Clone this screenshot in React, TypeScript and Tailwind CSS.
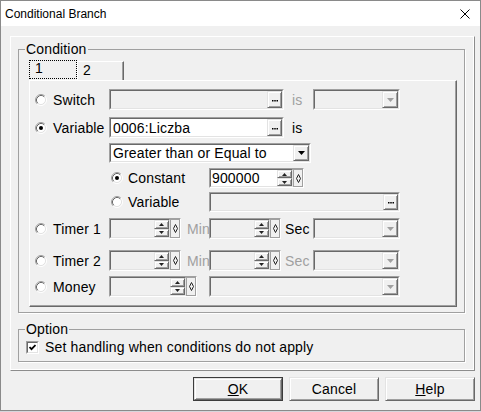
import type { ReactNode } from "react";

const sunkenOut = "border border-t-[#a0a0a0] border-l-[#a0a0a0] border-r-white border-b-white";
const sunkenIn = "border border-t-[#696969] border-l-[#696969] border-r-[#e3e3e3] border-b-[#e3e3e3]";
const raised =
  "border border-t-[#e3e3e3] border-l-[#e3e3e3] border-r-[#696969] border-b-[#696969] shadow-[inset_1px_1px_0_#fff,inset_-1px_-1px_0_#a0a0a0] bg-[#f0f0f0]";

function Radio({ checked }: { checked?: boolean }) {
  return (
    <svg width="12" height="12" viewBox="0 0 12 12" className="shrink-0">
      <circle cx="6" cy="6" r="4.5" fill="#fff" />
      <path d="M2.11 9.89A5.5 5.5 0 0 1 9.89 2.11" fill="none" stroke="#a0a0a0" />
      <path d="M9.89 2.11A5.5 5.5 0 0 1 2.11 9.89" fill="none" stroke="#fff" />
      <path d="M2.82 9.18A4.5 4.5 0 0 1 9.18 2.82" fill="none" stroke="#696969" />
      <path d="M9.18 2.82A4.5 4.5 0 0 1 2.82 9.18" fill="none" stroke="#e3e3e3" />
      {checked && <circle cx="6" cy="6" r="2" fill="#000" />}
    </svg>
  );
}

function Sunken({ className, white, children }: { className: string; white?: boolean; children?: ReactNode }) {
  return (
    <div className={`${sunkenOut} shrink-0 flex ${className}`}>
      <div className={`${sunkenIn} flex-1 flex min-w-0 ${white ? "bg-white" : "bg-[#f0f0f0]"}`}>{children}</div>
    </div>
  );
}

function Dots() {
  return (
    <svg width="6" height="2" viewBox="0 0 6 2">
      <rect x="0" y="0" width="1.5" height="1.5" fill="#000" />
      <rect x="2.25" y="0" width="1.5" height="1.5" fill="#000" />
      <rect x="4.5" y="0" width="1.5" height="1.5" fill="#000" />
    </svg>
  );
}

function EllipsisField({ className, text }: { className: string; text?: string }) {
  return (
    <Sunken className={className} white={!!text}>
      <span className="flex-1 pl-[2px] self-center whitespace-nowrap">{text}</span>
      <div className={`${raised} w-[15px] flex items-center justify-center pt-[2px]`}>
        <Dots />
      </div>
    </Sunken>
  );
}

function Combo({ className, text, enabled }: { className: string; text?: string; enabled?: boolean }) {
  return (
    <Sunken className={className} white={enabled}>
      <span className="flex-1 pl-[2px] self-center whitespace-nowrap">{text}</span>
      <div className={`${raised} w-[16px] flex items-center justify-center`}>
        <svg width="7" height="4" viewBox="0 0 7 4">
          <polygon points="0,0 7,0 3.5,4" fill={enabled ? "#000" : "#a0a0a0"} />
        </svg>
      </div>
    </Sunken>
  );
}

function Arrow({ up }: { up?: boolean }) {
  return (
    <svg width="5" height="3" viewBox="0 0 5 3">
      <polygon points={up ? "0,3 5,3 2.5,0" : "0,0 5,0 2.5,3"} fill="#222" />
    </svg>
  );
}

function Spin({ className, value }: { className: string; value?: string }) {
  return (
    <div className={`${sunkenOut} shrink-0 flex ${className}`}>
      <div className={`${sunkenIn} flex-1 flex min-w-0 ${value ? "bg-white" : "bg-[#f0f0f0]"}`}>
        <span className="flex-1 pl-[1px] self-center">{value}</span>
        <div className="w-[15px] flex flex-col">
          <div className={`${raised} flex-1 flex items-center justify-center`}>
            <Arrow up />
          </div>
          <div className={`${raised} flex-1 flex items-center justify-center`}>
            <Arrow />
          </div>
        </div>
      </div>
      <div className="w-[10px] border border-[#a0a0a0] bg-[#f0f0f0] flex items-center justify-center">
        <svg width="5" height="9" viewBox="0 0 5 9">
          <polygon points="2.5,0.5 4.5,4.5 2.5,8.5 0.5,4.5" fill="none" stroke="#222" />
        </svg>
      </div>
    </div>
  );
}

function Button({ children, isDefault }: { children: ReactNode; isDefault?: boolean }) {
  return (
    <div className={`w-[90px] h-[24px] flex ${isDefault ? "border border-[#3c3c3c]" : ""}`}>
      <div className={`${raised} flex-1 flex items-center justify-center`}>{children}</div>
    </div>
  );
}

export default function App() {
  return (
    <div className="w-[481px] h-[412px] bg-[#d6d6dc] font-['Liberation_Sans',Arial,sans-serif] text-[14px] leading-[16px] text-black">
      <div className="w-[481px] h-[411px] border border-[#8a8a8a] bg-[#f0f0f0] flex flex-col">
        <div className="h-[25px] shrink-0 bg-white flex items-center justify-between pl-[4px] pr-[10px]">
          <span className="text-[12px]">Conditional Branch</span>
          <svg width="10" height="10" viewBox="0 0 10 10">
            <path d="M0.5 0.5L9.5 9.5M9.5 0.5L0.5 9.5" stroke="#000" strokeWidth="1" />
          </svg>
        </div>

        <div className="pl-[9px] pt-[10px] flex flex-col tracking-[0.15px]">
          <div className="w-[465px] h-[335px] border border-t-white border-l-white border-r-[#8c8c8c] border-b-[#8c8c8c] shadow-[inset_-1px_-1px_0_#fff]">
            <fieldset className="ml-[7px] mt-[5px] w-[447px] border border-[#a0a0a0] shadow-[1px_1px_0_#fff]">
              <legend className="ml-[6px] px-[1px] leading-[14px]">Condition</legend>
              <div className="pt-[4px] pl-[10px] pr-[7px] pb-[5px]">
                <div className="flex h-[20px] items-start">
                  <div className="w-[48px] h-[19px] border border-dotted border-black pl-[5px] leading-[15px]">1</div>
                  <div className="w-[47px] h-[19px] mt-[1px] border-t border-l border-r border-t-white border-l-white border-r-[#696969] shadow-[inset_-1px_0_0_#a0a0a0] pl-[5px] leading-[16px]">
                    2
                  </div>
                </div>

                <div className="w-[428px] h-[227px] border border-t-white border-l-white border-r-[#696969] border-b-[#696969] shadow-[inset_-1px_-1px_0_#a0a0a0] flex flex-col">
                  <div className="flex items-center h-[21px] mt-[8px] pl-[5px]">
                    <Radio />
                    <span className="ml-[6px] w-[56px]">Switch</span>
                    <EllipsisField className="w-[175px] h-[21px]" />
                    <span className="w-[29px] pl-[8px] text-[#a0a0a0]">is</span>
                    <Combo className="w-[87px] h-[21px]" />
                  </div>

                  <div className="flex items-center h-[21px] mt-[7px] pl-[5px]">
                    <Radio checked />
                    <span className="ml-[6px] w-[56px]">Variable</span>
                    <EllipsisField className="w-[175px] h-[21px]" text="0006:Liczba" />
                    <span className="pl-[8px]">is</span>
                  </div>

                  <div className="flex h-[20px] mt-[5px] pl-[79px]">
                    <Combo className="w-[202px] h-[20px]" text="Greater than or Equal to" enabled />
                  </div>

                  <div className="flex items-center h-[20px] mt-[5px] pl-[81px]">
                    <Radio checked />
                    <span className="ml-[5px] w-[81px]">Constant</span>
                    <Spin className="w-[95px] h-[20px]" value="900000" />
                  </div>

                  <div className="flex items-center h-[20px] mt-[4px] pl-[81px]">
                    <Radio />
                    <span className="ml-[5px] w-[81px]">Variable</span>
                    <EllipsisField className="w-[191px] h-[20px]" />
                  </div>

                  <div className="flex items-center h-[21px] mt-[6px] pl-[5px]">
                    <Radio />
                    <span className="ml-[6px] w-[56px]">Timer 1</span>
                    <Spin className="w-[72px] h-[21px]" />
                    <span className="w-[28px] pl-[6px] text-[#a0a0a0]">Min</span>
                    <Spin className="w-[72px] h-[21px]" />
                    <span className="w-[32px] pl-[4px]">Sec</span>
                    <Combo className="w-[87px] h-[21px]" />
                  </div>

                  <div className="flex items-center h-[21px] mt-[11px] pl-[5px]">
                    <Radio />
                    <span className="ml-[6px] w-[56px]">Timer 2</span>
                    <Spin className="w-[72px] h-[21px]" />
                    <span className="w-[28px] pl-[6px] text-[#a0a0a0]">Min</span>
                    <Spin className="w-[72px] h-[21px]" />
                    <span className="w-[32px] pl-[4px] text-[#a0a0a0]">Sec</span>
                    <Combo className="w-[87px] h-[21px]" />
                  </div>

                  <div className="flex items-center h-[21px] mt-[5px] pl-[5px]">
                    <Radio />
                    <span className="ml-[6px] w-[56px]">Money</span>
                    <Spin className="w-[88px] h-[21px]" />
                    <Combo className="ml-[12px] w-[191px] h-[21px]" />
                  </div>
                </div>
              </div>
            </fieldset>

            <fieldset className="ml-[7px] mt-[9px] w-[447px] border border-[#a0a0a0] shadow-[1px_1px_0_#fff]">
              <legend className="ml-[6px] px-[1px] leading-[14px]">Option</legend>
              <div className="pt-[3px] pl-[7px] pb-[6px]">
                <div className="flex items-center h-[16px]">
                  <div className={`${sunkenOut} w-[13px] h-[13px] shrink-0 flex`}>
                    <div className={`${sunkenIn} flex-1 bg-white flex items-center justify-center`}>
                      <svg width="7" height="7" viewBox="0 0 7 7">
                        <polyline points="0.5,3 2.5,5.2 6.5,1" fill="none" stroke="#000" strokeWidth="1.8" />
                      </svg>
                    </div>
                  </div>
                  <span className="ml-[6px]">Set handling when conditions do not apply</span>
                </div>
              </div>
            </fieldset>
          </div>

          <div className="flex gap-[6px] mt-[6px] ml-[183px]">
            <Button isDefault>
              <span>
                <span className="underline">O</span>K
              </span>
            </Button>
            <Button>Cancel</Button>
            <Button>
              <span>
                <span className="underline">H</span>elp
              </span>
            </Button>
          </div>
        </div>
      </div>
    </div>
  );
}
